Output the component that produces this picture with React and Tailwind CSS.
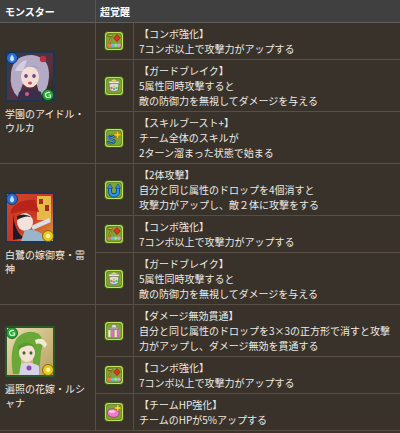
import React from "react";

const font = { fontFamily: '"Noto Sans CJK JP", "Noto Sans", sans-serif' };

const IconFrame = ({ children }) => (
  <svg width="20" height="20" viewBox="0 0 20 20">
    <rect x="0.5" y="0.5" width="19" height="19" rx="3.5" fill="#c2e25e" stroke="#34500e" />
    <rect x="2.3" y="2.3" width="15.4" height="15.4" rx="2.2" fill="#4e6e1c" />
    <rect x="2.9" y="2.9" width="14.2" height="14.2" rx="2" fill="#7fa334" />
    {children}
  </svg>
);

const ComboIcon = () => (
  <IconFrame>
    <text x="3.5" y="11.5" fontSize="10" fontWeight="bold" fill="#ffe84a" stroke="#4a2a00" strokeWidth="0.5" fontFamily="Liberation Sans, sans-serif">7</text>
    <path d="M13 3.5 L16.3 7 L13 10.5 L9.7 7 Z" fill="#e8321e" stroke="#6a0a00" strokeWidth="0.5" />
    <circle cx="5.3" cy="14.3" r="1.7" fill="#ff6a5a" />
    <circle cx="8.5" cy="14.3" r="1.7" fill="#6ab8ff" />
    <circle cx="11.7" cy="14.3" r="1.7" fill="#8ae88a" />
    <circle cx="14.8" cy="14.3" r="1.7" fill="#e890f4" />
  </IconFrame>
);

const GuardIcon = () => (
  <IconFrame>
    <path d="M7 5 L10 3.3 L13 5 Z" fill="#ffe066" />
    <rect x="4.8" y="5.3" width="10.4" height="2.2" rx="1" fill="#f0f0f0" stroke="#555" strokeWidth="0.3" />
    <path d="M5 8 Q10 6.5 15 8 L14 14.5 Q10 16.8 6 14.5 Z" fill="#e0e0d8" stroke="#444" strokeWidth="0.5" />
    <circle cx="7.5" cy="12" r="1.2" fill="#ff5a4a" />
    <circle cx="10" cy="13" r="1.2" fill="#4aa8ff" />
    <circle cx="12.5" cy="12" r="1.2" fill="#4ad04a" />
    <circle cx="10" cy="10.3" r="1.1" fill="#f0c020" />
  </IconFrame>
);

const SkillIcon = () => (
  <IconFrame>
    <text x="3" y="16" fontSize="13" fontWeight="bold" fill="#3aa6ff" stroke="#08306a" strokeWidth="0.6" fontFamily="Liberation Sans, sans-serif">S</text>
    <path d="M12.5 3.3 h2 v2.5 h2.5 v2 h-2.5 v2.5 h-2 v-2.5 h-2.5 v-2 h2.5 Z" fill="#ffd21e" stroke="#8a5a00" strokeWidth="0.4" />
  </IconFrame>
);

const TwoIcon = () => (
  <IconFrame>
    <path d="M6 7.5 V11 Q6 15.5 10 15.5 Q14 15.5 14 11 V7.5" fill="none" stroke="#08306a" strokeWidth="3.8" />
    <path d="M6 7.5 V11 Q6 15.5 10 15.5 Q14 15.5 14 11 V7.5" fill="none" stroke="#2a96f4" strokeWidth="2.5" />
    <path d="M3.3 8.3 L6 4 L8.7 8.3 Z" fill="#2a96f4" stroke="#08306a" strokeWidth="0.5" />
    <path d="M11.3 8.3 L14 4 L16.7 8.3 Z" fill="#2a96f4" stroke="#08306a" strokeWidth="0.5" />
  </IconFrame>
);

const PierceIcon = () => (
  <IconFrame>
    <path d="M7 7 Q7 3.3 10 3.3 Q13 3.3 13 7 Z" fill="#dcdcdc" stroke="#333" strokeWidth="0.4" />
    <rect x="5.8" y="6.5" width="8.4" height="1.6" fill="#a0a0a0" />
    <rect x="4.3" y="9" width="2.2" height="7.2" fill="#ffd6f0" />
    <rect x="7.2" y="9" width="2.2" height="7.2" fill="#e070c8" />
    <rect x="10.6" y="9" width="2.2" height="7.2" fill="#ffd6f0" />
    <rect x="13.5" y="9" width="2.2" height="7.2" fill="#e070c8" />
  </IconFrame>
);

const HpIcon = () => (
  <IconFrame>
    <path d="M3.3 11 Q4 6.3 9.5 6.8 Q14.7 7.3 15.2 11.5 Q14 15.7 9 15.2 Q3.8 14.6 3.3 11 Z" fill="#f57ccc" stroke="#7a1a5a" strokeWidth="0.5" />
    <ellipse cx="8" cy="9.6" rx="3.2" ry="1.3" fill="#ffc9ec" />
    <path d="M12.8 2.8 h1.9 v2.2 h2.2 v1.9 h-2.2 v2.2 h-1.9 v-2.2 h-2.2 v-1.9 h2.2 Z" fill="#ffe23a" stroke="#8a5a00" strokeWidth="0.4" />
  </IconFrame>
);

const Portrait1 = () => (
  <svg width="50" height="51" viewBox="0 0 50 51">
    <defs>
      <linearGradient id="p1bg" x1="0" y1="0" x2="1" y2="1">
        <stop offset="0" stopColor="#2e3c48" />
        <stop offset="0.6" stopColor="#5a3040" />
        <stop offset="1" stopColor="#1a3020" />
      </linearGradient>
    </defs>
    <rect x="0" y="0" width="50" height="51" rx="2" fill="#1d3550" />
    <rect x="2" y="2" width="46" height="47" fill="url(#p1bg)" />
    <path d="M6 22 Q8 4 27 4 Q45 6 44 26 Q43 40 35 46 L31 30 L19 30 L13 46 Q4 38 6 22 Z" fill="#b3aac6" />
    <path d="M10 20 Q14 10 22 9 L18 20 Z" fill="#d4cee0" />
    <ellipse cx="25" cy="26" rx="9" ry="10.5" fill="#f4ddd2" />
    <path d="M15 20 Q22 11 35 18 Q30 14 25 15 Q19 15 15 20 Z" fill="#9d93b6" />
    <ellipse cx="21" cy="25" rx="1.8" ry="2" fill="#6a4a8a" />
    <ellipse cx="29" cy="25" rx="1.8" ry="2" fill="#6a4a8a" />
    <ellipse cx="25" cy="32" rx="2" ry="1.5" fill="#c04a5a" />
    <path d="M14 41 Q25 35 36 41 L38 49 L12 49 Z" fill="#3a2f4a" />
    <circle cx="22" cy="43" r="2" fill="#d05a8a" />
    <circle cx="38" cy="8" r="3.2" fill="#b83040" />
    <circle cx="7" cy="7" r="5.5" fill="#2a6ed0" stroke="#0a2a60" strokeWidth="0.8" />
    <path d="M7 3.5 Q9.5 7 9 8.5 Q8 10.5 7 10.5 Q6 10.5 5 8.5 Q4.5 7 7 3.5 Z" fill="#bfe0ff" />
    <circle cx="43" cy="44" r="5.5" fill="#2aa83a" stroke="#0a4a10" strokeWidth="0.8" />
    <path d="M45 41.5 Q40 41 40.5 44.5 Q41.5 47.5 45.5 46 L45.5 44 L43.5 44" fill="none" stroke="#d8ffd8" strokeWidth="1.2" />
  </svg>
);

const Portrait2 = () => (
  <svg width="50" height="51" viewBox="0 0 50 51">
    <defs>
      <linearGradient id="p2bg" x1="0" y1="0" x2="1" y2="1">
        <stop offset="0" stopColor="#d04a2a" />
        <stop offset="0.5" stopColor="#c83424" />
        <stop offset="1" stopColor="#e0a03a" />
      </linearGradient>
    </defs>
    <rect x="0" y="0" width="50" height="51" rx="2" fill="#1d3550" />
    <rect x="2" y="2" width="46" height="47" fill="url(#p2bg)" />
    <rect x="32" y="4" width="14" height="24" fill="#e6b84a" />
    <rect x="34" y="7" width="4" height="5" fill="#a0301a" />
    <rect x="40" y="13" width="4" height="6" fill="#a0301a" />
    <path d="M6 18 Q14 6 30 8 L34 20 Q20 16 6 22 Z" fill="#b82418" />
    <path d="M8 22 Q10 42 20 46 L8 48 Z" fill="#1a1a2a" />
    <ellipse cx="20" cy="30" rx="8" ry="9" fill="#f2e2da" />
    <path d="M12 24 Q20 20 28 26 Q22 22 12 28 Z" fill="#222" />
    <path d="M20 38 Q30 36 40 44 L42 49 L16 49 Z" fill="#9ab4c8" />
    <path d="M26 34 L44 26 L46 30 L28 38 Z" fill="#d8dde6" />
    <circle cx="7" cy="7" r="5.5" fill="#2a6ed0" stroke="#0a2a60" strokeWidth="0.8" />
    <path d="M7 3.5 Q9.5 7 9 8.5 Q8 10.5 7 10.5 Q6 10.5 5 8.5 Q4.5 7 7 3.5 Z" fill="#bfe0ff" />
    <circle cx="43" cy="44" r="5.5" fill="#e8c81a" stroke="#6a5000" strokeWidth="0.8" />
    <circle cx="43" cy="44" r="2.2" fill="#fff3a0" />
  </svg>
);

const Portrait3 = () => (
  <svg width="50" height="51" viewBox="0 0 50 51">
    <defs>
      <linearGradient id="p3bg" x1="0" y1="0" x2="1" y2="1">
        <stop offset="0" stopColor="#e8dcae" />
        <stop offset="1" stopColor="#b8a060" />
      </linearGradient>
    </defs>
    <rect x="0" y="0" width="50" height="51" rx="2" fill="#2a5a2a" />
    <rect x="2" y="2" width="46" height="47" fill="url(#p3bg)" />
    <path d="M8 48 Q4 24 12 12 Q22 2 34 8 Q40 14 36 26 L34 48 L28 48 L28 26 L16 26 L16 48 Z" fill="#6aa83a" />
    <ellipse cx="22" cy="27" rx="8" ry="9" fill="#f6e2d4" />
    <path d="M13 20 Q22 12 31 22 Q24 16 13 24 Z" fill="#5a9a2a" />
    <ellipse cx="19" cy="27" rx="1.5" ry="1.8" fill="#3a6a2a" />
    <ellipse cx="26" cy="27" rx="1.5" ry="1.8" fill="#3a6a2a" />
    <path d="M16 38 Q24 34 34 40 L34 49 L14 49 Z" fill="#d8d2e8" />
    <circle cx="24" cy="42" r="2.5" fill="#8a4aa8" />
    <path d="M30 14 Q38 10 42 18 L40 22 Q36 16 31 18 Z" fill="#f0ead0" />
    <circle cx="7" cy="7" r="5.5" fill="#2aa83a" stroke="#0a4a10" strokeWidth="0.8" />
    <path d="M9 4.5 Q4 4 4.5 7.5 Q5.5 10.5 9.5 9 L9.5 7 L7.5 7" fill="none" stroke="#d8ffd8" strokeWidth="1.2" />
    <circle cx="43" cy="44" r="5.5" fill="#e8c81a" stroke="#6a5000" strokeWidth="0.8" />
    <circle cx="43" cy="44" r="2.2" fill="#fff3a0" />
  </svg>
);

const monsters = [
  {
    name: ["学園のアイドル・", "ウルカ"],
    portrait: <Portrait1 />,
    awakenings: [
      { icon: <ComboIcon />, title: "【コンボ強化】", lines: ["7コンボ以上で攻撃力がアップする"] },
      { icon: <GuardIcon />, title: "【ガードブレイク】", lines: ["5属性同時攻撃すると", "敵の防御力を無視してダメージを与える"] },
      { icon: <SkillIcon />, title: "【スキルブースト+】", lines: ["チーム全体のスキルが", "2ターン溜まった状態で始まる"] },
    ],
  },
  {
    name: ["白鷺の嫁御寮・雷", "神"],
    portrait: <Portrait2 />,
    awakenings: [
      { icon: <TwoIcon />, title: "【2体攻撃】", lines: ["自分と同じ属性のドロップを4個消すと", "攻撃力がアップし、敵２体に攻撃をする"] },
      { icon: <ComboIcon />, title: "【コンボ強化】", lines: ["7コンボ以上で攻撃力がアップする"] },
      { icon: <GuardIcon />, title: "【ガードブレイク】", lines: ["5属性同時攻撃すると", "敵の防御力を無視してダメージを与える"] },
    ],
  },
  {
    name: ["遍照の花嫁・ルシ", "ャナ"],
    portrait: <Portrait3 />,
    awakenings: [
      { icon: <PierceIcon />, title: "【ダメージ無効貫通】", lines: ["自分と同じ属性のドロップを3×3の正方形で消すと攻撃", "力がアップし、ダメージ無効を貫通する"] },
      { icon: <ComboIcon />, title: "【コンボ強化】", lines: ["7コンボ以上で攻撃力がアップする"] },
      { icon: <HpIcon />, title: "【チームHP強化】", lines: ["チームのHPが5%アップする"] },
    ],
  },
];

export default function App() {
  return (
    <div className="w-[400px] h-[433px] overflow-hidden bg-[#38322b] text-[10px] leading-[15px] text-[#eeeae4]" style={font}>
      <div className="flex h-[23px] bg-[#404040] border-b border-[#5e5e5e] font-bold text-white">
        <div className="w-[96px] border-r border-[#565656] pl-[5px] flex items-center">モンスター</div>
        <div className="flex-1 pl-[4px] flex items-center">超覚醒</div>
      </div>
      {monsters.map((m, i) => (
        <div key={i} className="flex border-b border-[#574e44]">
          <div className="w-[96px] shrink-0 border-r border-[#574e44] flex flex-col justify-center px-[5px] gap-[5px]">
            <div className="w-[50px] h-[51px]">{m.portrait}</div>
            <div className="leading-[14px]">
              {m.name.map((n, k) => (
                <div key={k} className="whitespace-nowrap">{n}</div>
              ))}
            </div>
          </div>
          <div className="flex-1 flex flex-col">
            {m.awakenings.map((a, j) => (
              <div key={j} className={"flex " + (j < 2 ? "border-b border-[#574e44]" : "")}>
                <div className="w-[38px] shrink-0 border-r border-[#574e44] flex items-center justify-center pr-[1px]">
                  {a.icon}
                </div>
                <div className="flex-1 pl-[5px] pt-[3px] pb-[3px]">
                  <div className="whitespace-nowrap">{a.title}</div>
                  {a.lines.map((l, k) => (
                    <div key={k} className="whitespace-nowrap">{l}</div>
                  ))}
                </div>
              </div>
            ))}
          </div>
        </div>
      ))}
    </div>
  );
}
